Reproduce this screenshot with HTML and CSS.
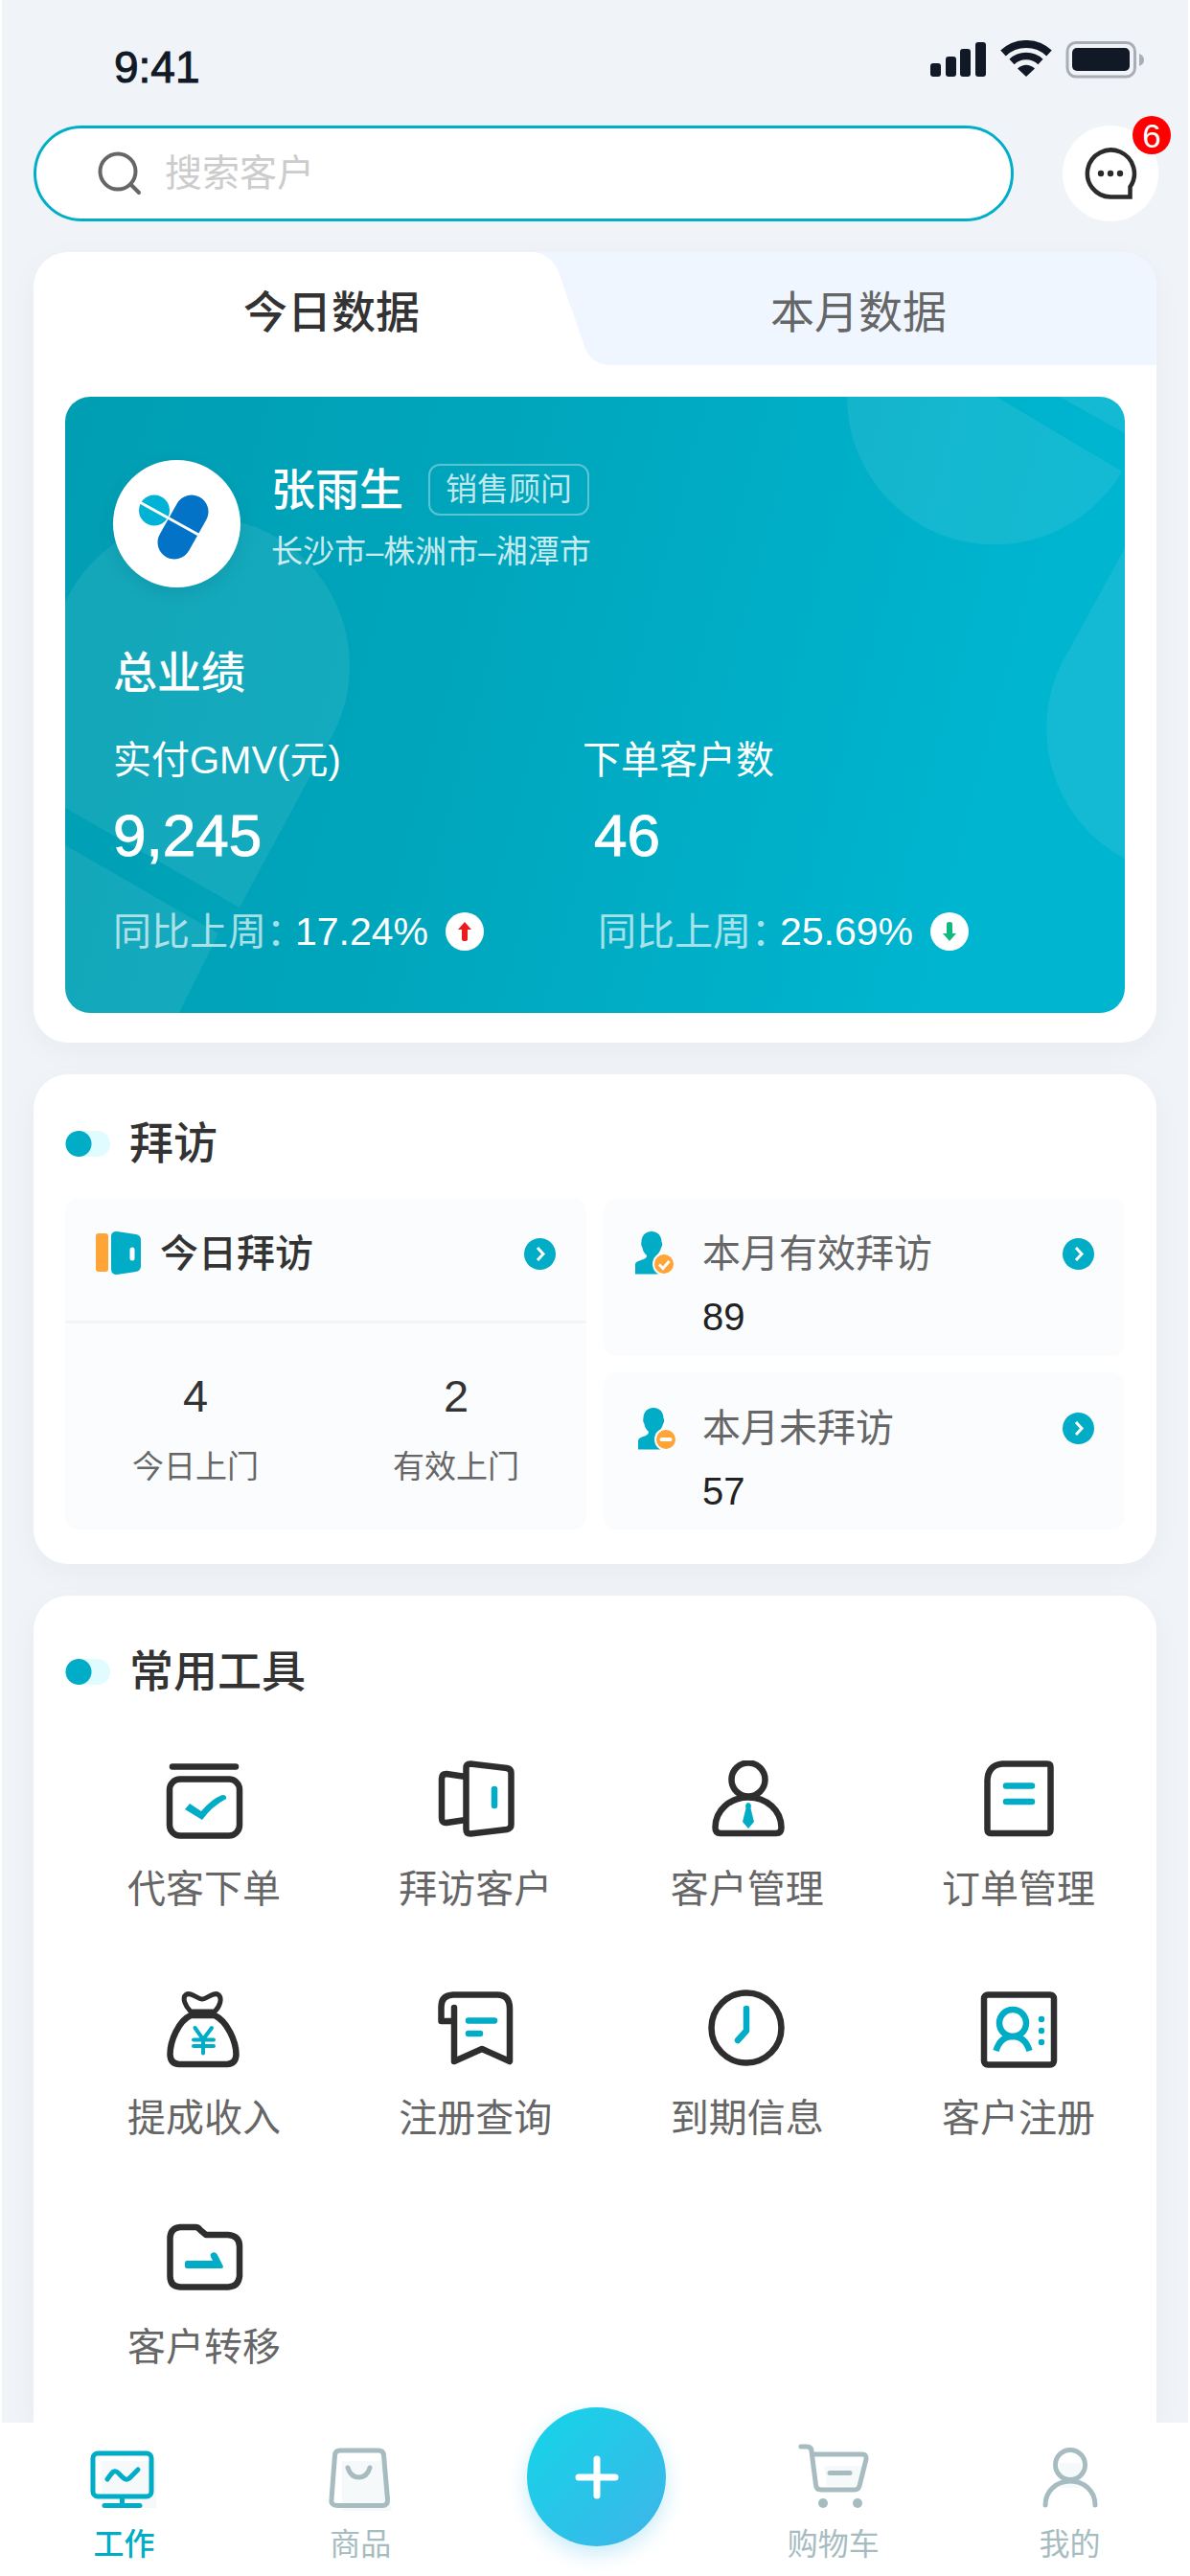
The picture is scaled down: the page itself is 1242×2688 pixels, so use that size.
FILE: index.html
```html
<!DOCTYPE html>
<html lang="zh-CN">
<head>
	<meta charset="utf-8">
	<meta name="viewport" content="width=device-width, initial-scale=1">
	<title>工作</title>
	<link rel="stylesheet" href="styles.css">
</head>
<body>
<div class="app">
	<header class="status">
		<span class="time">9:41</span>
		<svg class="status-icons" viewBox="0 0 226 40">
			<g fill="#121926">
				<rect x="1" y="24" width="11" height="14" rx="3"/>
				<rect x="17" y="17" width="11" height="21" rx="3"/>
				<rect x="32" y="9" width="11" height="29" rx="3"/>
				<rect x="48" y="2" width="11" height="36" rx="3"/>
				<path d="M101 38L92 29.500Q101 22 110 29.500Z"/>
				<rect x="149" y="8" width="60" height="24" rx="5"/>
			</g>
			<g fill="none" stroke="#121926">
				<path d="M77 13.500A35 35 0 0 1 125 13.500" stroke-width="8"/>
				<path d="M86 22.500A22 22 0 0 1 116 22.500" stroke-width="7.500"/>
			</g>
			<rect x="144" y="2.500" width="70.500" height="35.500" rx="9" fill="none" stroke="#a9adb4" stroke-width="3"/>
			<path d="M219 14Q224 16 224 20.500T219 27Z" fill="#a9adb4"/>
		</svg>
	</header>

	<form class="top">
		<label class="search">
			<svg class="search-icon" viewBox="0 0 46 46" fill="none" stroke="#666" stroke-width="4" stroke-linecap="round">
				<circle cx="21" cy="21" r="18.500"/>
				<path d="M35 35L43 43"/>
			</svg>
			<input type="text" placeholder="搜索客户" aria-label="搜索客户">
		</label>
		<button type="button" class="message" aria-label="消息">
			<svg viewBox="0 0 56 56" fill="none" stroke="#2b2b2b" stroke-width="4.500">
				<path d="M28 52.500H48.500V42A24.500 24.500 0 1 0 28 52.500Z"/>
				<g fill="#2b2b2b" stroke="none"><circle cx="18" cy="28" r="3.200"/><circle cx="28" cy="28" r="3.200"/><circle cx="38" cy="28" r="3.200"/></g>
			</svg>
			<span class="badge">6</span>
		</button>
	</form>

	<main>
		<section class="card data">
			<div class="tabs">
				<svg class="tab-shape" viewBox="0 0 642 118" preserveAspectRatio="none">
					<path d="M0 0H642V118H106C88 118 81 108 77 94L54 24Q47 2 28 0Z" fill="#eff6ff"/>
				</svg>
				<button type="button" class="tab active">今日数据</button>
				<button type="button" class="tab">本月数据</button>
			</div>
			<div class="hero">
				<svg class="hero-shapes" viewBox="0 0 1106 643" preserveAspectRatio="xMidYMid slice" fill="#fff" fill-opacity=".08">
					<path d="M0 214A156 156 0 0 1 141 125A156 156 0 0 1 297 281A156 156 0 0 1 274 362L182 533L0 429Z"/>
					<path d="M0 468L160 560L119 643H0Z"/>
					<path d="M816 0A154 154 0 0 0 1103 78L972 0Z"/>
					<path d="M1038 0L1106 38V0Z"/>
					<path d="M1106 158L1049 262A154 154 0 0 0 1106 482Z"/>
				</svg>
				<div class="profile">
					<div class="avatar">
						<svg viewBox="0 0 133 133">
							<circle cx="43" cy="52.500" r="16" fill="#00b2d6"/>
							<path d="M82 54L64 86" stroke="#0273c6" stroke-width="35" stroke-linecap="round"/>
							<path d="M26 43L91 79" stroke="#fff" stroke-width="3"/>
						</svg>
					</div>
					<div>
						<div class="who"><span class="name">张雨生</span><span class="tag">销售顾问</span></div>
						<div class="city">长沙市–株洲市–湘潭市</div>
					</div>
				</div>
				<h2 class="total">总业绩</h2>
				<div class="metrics">
					<div class="metric">
						<div class="metric-label">实付GMV(元)</div>
						<div class="metric-value">9,245</div>
						<div class="compare">
							<span class="dim">同比上周：</span><span>17.24%</span>
							<svg viewBox="0 0 40 40"><circle cx="20" cy="20" r="20" fill="#fff"/><path d="M20 10L27 18H23V28Q23 30 20 30T17 28V18H13Z" fill="#eb1c1c"/></svg>
						</div>
					</div>
					<div class="metric second">
						<div class="metric-label">下单客户数</div>
						<div class="metric-value">46</div>
						<div class="compare">
							<span class="dim">同比上周：</span><span>25.69%</span>
							<svg viewBox="0 0 40 40"><circle cx="20" cy="20" r="20" fill="#fff"/><path d="M20 30L27 22H23V12Q23 10 20 10T17 12V22H13Z" fill="#10b981"/></svg>
						</div>
					</div>
				</div>
			</div>
		</section>

		<section class="card visit">
			<h2 class="title"><span class="dot"></span>拜访</h2>
			<div class="panels">
				<div class="panel today">
					<div class="today-head">
						<svg class="door" viewBox="0 0 48 48">
							<rect x="0" y="3" width="13" height="40" rx="3" fill="#ffa436"/>
							<path d="M22 1L42 4Q47 5 47 10V37Q47 42 42 43L22 46Q16 46 16 40V6Q16 1 22 1Z" fill="#00acc6"/>
							<path d="M38 20V29" stroke="#fff" stroke-width="5" stroke-linecap="round"/>
						</svg>
						<span>今日拜访</span>
						<button type="button" class="go" aria-label="今日拜访"><svg viewBox="0 0 33 33"><path d="M14 10L20 16.500L14 23"/></svg></button>
					</div>
					<div class="counts">
						<div><div class="count">4</div><div class="count-label">今日上门</div></div>
						<div><div class="count">2</div><div class="count-label">有效上门</div></div>
					</div>
				</div>
				<div class="panel month">
					<svg class="person" viewBox="0 0 44 48">
						<path d="M18 1C25 1 28.500 6 28.500 12C29.500 13 29.500 16 28 18C27 22 25 24 23.500 26V29Q24 33 27 33L25 45.500H1V36C1 30 13 32 13 26C11 24 9 22 8.500 18C7 16 7 13 7.500 12C7.500 6 11 1 18 1Z" fill="#00acc6"/>
						<circle cx="31" cy="35" r="12" fill="#fbfcfe"/><circle cx="31" cy="35" r="10" fill="#ffa436"/>
						<path d="M26 35.500L30 39.500L36.500 32" fill="none" stroke="#fff" stroke-width="3"/>
					</svg>
					<div class="month-text"><div class="month-label">本月有效拜访</div><div class="month-value">89</div></div>
					<button type="button" class="go" aria-label="本月有效拜访"><svg viewBox="0 0 33 33"><path d="M14 10L20 16.500L14 23"/></svg></button>
				</div>
				<div class="panel month">
					<svg class="person" viewBox="0 0 44 48">
						<path d="M20 3C27 3 30.500 8 30.500 14C31.500 15 31.500 18 30 20C29 24 27 26 25.500 28V31Q26 35 29 35L27 46.500H4V38C4 32 15 34 15 28C13 26 11 24 10.500 20C9 18 9 15 9.500 14C9.500 8 13 3 20 3Z" fill="#00acc6"/>
						<circle cx="33" cy="36" r="12" fill="#fbfcfe"/><circle cx="33" cy="36" r="10" fill="#ffa436"/>
						<path d="M28.500 36H37.500" stroke="#fff" stroke-width="4" stroke-linecap="round"/>
					</svg>
					<div class="month-text"><div class="month-label">本月未拜访</div><div class="month-value">57</div></div>
					<button type="button" class="go" aria-label="本月未拜访"><svg viewBox="0 0 33 33"><path d="M14 10L20 16.500L14 23"/></svg></button>
				</div>
			</div>
		</section>

		<section class="card tools">
			<h2 class="title"><span class="dot"></span>常用工具</h2>
			<div class="grid">
				<a href="#" class="tool">
					<svg viewBox="0 0 84 84">
						<path class="k" d="M9 6.500H75"/>
						<rect class="k" x="6" y="19.500" width="73" height="59" rx="11"/>
						<path class="f" d="M22 51L27 45L39 53Q50 40 61 36Q66 36 65 40Q50 48 40 62Z"/>
					</svg>
					<span>代客下单</span>
				</a>
				<a href="#" class="tool">
					<svg viewBox="0 0 84 84">
						<path class="k" d="M37 3.500L75 8Q79.500 9 79.500 13V67Q79.500 71 75 72L37 76.500Q32.500 76.500 32.500 72V8Q32.500 3.500 37 3.500ZM32 17L12 14Q7 14 7 19V60Q7 65.500 12 65L32 62"/>
						<path class="t" d="M62 30V47"/>
					</svg>
					<span>拜访客户</span>
				</a>
				<a href="#" class="tool">
					<svg viewBox="0 0 84 84">
						<circle class="k" cx="43" cy="20" r="17.500"/>
						<path class="k" d="M8.500 70C8.500 52 24 38.500 43 38.500S77.500 52 77.500 70Q77.500 76 72 76H14Q8.500 76 8.500 70Z"/>
						<path class="f" d="M43 44Q47 45 45.500 50L49 64L43 71L37 64L40.500 50Q39 45 43 44Z"/>
					</svg>
					<span>客户管理</span>
				</a>
				<a href="#" class="tool">
					<svg viewBox="0 0 84 84">
						<path class="k" d="M25 3.500H72Q75.500 3.500 75.500 7V72Q75.500 76 72 76H13Q9.500 76 9.500 72V21Q10 5 25 3.500Z"/>
						<path class="t" d="M29 26.500H56M29 43H56"/>
					</svg>
					<span>订单管理</span>
				</a>
				<a href="#" class="tool">
					<svg viewBox="0 0 84 84">
						<path class="k thin" d="M28 23C22 17 19 9 23 5.500C28 2 35 10 40 10S52 2 57 5.500C61 9 59 17 53 23Z"/>
						<path class="k" d="M28 27H53C66 33 75.500 54 75.500 68Q75 77.500 66 78H16Q7 77.500 6.500 68C6.500 54 15 33 28 27Z"/>
						<path class="t slim" d="M32.500 40L41 52L50 40M31 52.500H52M31 59H52M41 52V66.500"/>
					</svg>
					<span>提成收入</span>
				</a>
				<a href="#" class="tool">
					<svg viewBox="0 0 84 84">
						<path class="k" d="M20 19V75L49 62L78 75V20Q78 5.500 65 5.500H19Q6.500 6 6.500 18V33H19"/>
						<path class="t" d="M35 32.500H62M35 46H47"/>
					</svg>
					<span>注册查询</span>
				</a>
				<a href="#" class="tool">
					<svg viewBox="0 0 84 84">
						<circle class="k" cx="41" cy="40" r="36.500"/>
						<path class="t" d="M41 20V43L32 53"/>
					</svg>
					<span>到期信息</span>
				</a>
				<a href="#" class="tool">
					<svg viewBox="0 0 84 84">
						<rect class="k" x="6" y="5.500" width="73" height="73" rx="4"/>
						<circle class="t" cx="36" cy="35" r="14"/>
						<path class="t flat" d="M18.500 64Q23 49 36 49T53.500 64"/>
						<g class="f"><circle cx="66" cy="31" r="3.200"/><circle cx="66" cy="43" r="3.200"/><circle cx="66" cy="55" r="3.200"/></g>
					</svg>
					<span>客户注册</span>
				</a>
				<a href="#" class="tool">
					<svg viewBox="0 0 84 84">
						<path class="k" d="M17 9H33Q36 9 38 12L44 17H67Q79 18 79 29V60Q78 71 67 71.500H17Q6.500 71 6.500 60V20Q7 10 17 9Z"/>
						<path class="f" d="M24 44H51L49 40Q48 37 50 36Q54 34 56 38L62 50Q62 52 60 52H24Q22 52 22 50V46Q22 44 24 44Z"/>
					</svg>
					<span>客户转移</span>
				</a>
			</div>
		</section>
	</main>

	<nav class="tabbar">
		<a href="#" class="nav current">
			<svg viewBox="0 0 74 70">
				<path class="pale" d="M14 18H71V67H14Z"/>
				<rect x="5" y="10" width="61" height="45" rx="5"/>
				<path d="M35.500 56V63M17 64.500H54M20 37C25 30 27 26 32 31S39 39 43 36L52 27"/>
			</svg>
			<span>工作</span>
		</a>
		<a href="#" class="nav">
			<svg viewBox="0 0 74 70">
				<path class="pale" d="M18 18H59L70 70H18Z"/>
				<path d="M16 7H56Q61 7 61.500 12L65.500 58Q66 64.500 60 64.500H13Q6 64.500 7 58L10.500 12Q11 7 16 7ZM24 25Q27 35 35.500 35T47 25"/>
			</svg>
			<span>商品</span>
		</a>
		<button type="button" class="add" aria-label="新增">
			<svg viewBox="0 0 46 46"><path d="M23 4V42M4 23H42"/></svg>
		</button>
		<a href="#" class="nav">
			<svg viewBox="0 0 74 70">
				<path class="pale" d="M27 23H67L62 44H30Z"/>
				<path d="M3 3H9Q14 3 14 8L18.500 43Q19 48 24 48H59Q63 48 64 44L71 16Q71.500 11 67 11H15M33 30.500H54"/>
				<circle class="wheel" cx="26" cy="62" r="5"/><circle class="wheel" cx="62" cy="62" r="5"/>
			</svg>
			<span>购物车</span>
		</a>
		<a href="#" class="nav">
			<svg viewBox="0 0 74 70">
				<path class="pale" d="M26 20H48V46H26Z"/>
				<circle cx="37" cy="22" r="15.500"/>
				<path d="M11 64C11 49 23 39 37 39S63 49 63 64"/>
			</svg>
			<span>我的</span>
		</a>
	</nav>
</div>
</body>
</html>
```

FILE: styles.css
```css
*{
	box-sizing: border-box;
}
body{
	margin: 0;
	background: #fff;
	color: #333;
	font-family: "Liberation Sans", "Noto Sans CJK SC", sans-serif;
	font-size: 40px;
}
button{
	border: none;
	padding: 0;
	background: none;
	font: inherit;
	color: inherit;
}
a{
	text-decoration: none;
	color: inherit;
}
h2{
	margin: 0;
	font-size: 46px;
	font-weight: 500;
}
svg{
	display: block;
	flex: none;
}
.app{
	display: flex;
	flex-direction: column;
	min-height: 100vh;
	background: #f0f4f8;
	border: solid #fff;
	border-width: 0 2px;
}

/* status bar */
.status{
	display: flex;
	justify-content: space-between;
	align-items: flex-start;
	padding: 42px 44px 33px 117px;
}
.time{
	font-size: 46px;
	line-height: 56px;
	color: #121926;
	-webkit-text-stroke: 1px #121926;
}
.status-icons{
	width: 226px;
	height: 40px;
}

/* search */
.top{
	display: flex;
	gap: 51px;
	padding: 0 31px 0 33px;
	margin-bottom: 32px;
}
.search{
	flex: 1;
	display: flex;
	align-items: center;
	gap: 24px;
	height: 100px;
	padding: 0 64px;
	background: #fff;
	border: 3px solid #00aec7;
	border-radius: 50px;
}
.search-icon{
	width: 46px;
	height: 46px;
}
.search input{
	flex: 1;
	min-width: 0;
	padding: 0;
	border: none;
	outline: none;
	background: none;
	font: inherit;
	font-size: 39px;
	color: #333;
}
.search input::placeholder{
	color: #ccc;
}
.message{
	position: relative;
	display: flex;
	align-items: center;
	justify-content: center;
	width: 100px;
	height: 100px;
	border-radius: 50%;
	background: #fff;
}
.message svg{
	width: 56px;
	height: 56px;
}
.badge{
	position: absolute;
	top: -10px;
	right: -13px;
	width: 40px;
	height: 40px;
	border-radius: 50%;
	background: #f00;
	color: #fff;
	font-size: 35px;
	line-height: 42px;
	text-align: center;
}

main{
	flex: 1;
	display: flex;
	flex-direction: column;
	gap: 33px;
	padding: 0 33px;
}
.card{
	background: #fff;
	border-radius: 36px;
	box-shadow: 0 8px 30px rgba(40, 50, 60, .04);
}
.data{
	padding-bottom: 31px;
}

/* tabs */
.tabs{
	position: relative;
	display: flex;
	height: 118px;
	border-radius: 36px 36px 0 0;
	overflow: hidden;
}
.tab-shape{
	position: absolute;
	top: 0;
	right: 0;
	width: 58%;
	height: 100%;
}
.tab{
	position: relative;
	flex: 1;
	padding-right: 36px;
	font-size: 46px;
	color: #666;
}
.tab.active{
	padding: 0 0 0 36px;
	font-weight: 500;
	color: #333;
}

/* sales card */
.hero{
	position: relative;
	margin: 33px 33px 0;
	padding: 66px 76px 61px 50px;
	border-radius: 26px;
	overflow: hidden;
	background: linear-gradient(105deg, #009eb3, #00a5bb 35%, #00b5d0 85%);
	color: #fff;
}
.hero-shapes{
	position: absolute;
	top: 0;
	left: 0;
	width: 100%;
	height: 100%;
}
.profile, .total, .metrics{
	position: relative;
}
.profile{
	display: flex;
	gap: 32px;
}
.avatar{
	width: 133px;
	height: 133px;
	border-radius: 50%;
	background: #fff;
	box-shadow: 0 6px 16px rgba(0, 80, 100, .15);
}
.who{
	display: flex;
	align-items: center;
	gap: 26px;
	margin-top: 4px;
}
.name{
	font-size: 46px;
	font-weight: 500;
	line-height: 54px;
}
.tag{
	height: 54px;
	padding: 0 16px;
	border: 2px solid rgba(255, 255, 255, .35);
	border-radius: 12px;
	font-size: 33px;
	line-height: 50px;
	color: rgba(255, 255, 255, .75);
}
.city{
	margin-top: 13px;
	font-size: 33px;
	line-height: 50px;
	color: rgba(255, 255, 255, .8);
}
.total{
	margin-top: 59px;
	line-height: 60px;
}
.metrics{
	display: grid;
	grid-template-columns: 1fr 1fr;
	margin-top: 33px;
}
.metric-label{
	line-height: 56px;
}
.metric-value{
	margin-top: 15px;
	font-size: 62px;
	line-height: 72px;
	-webkit-text-stroke: 1px #fff;
}
.compare{
	display: flex;
	align-items: center;
	margin-top: 40px;
	font-size: 41px;
	line-height: 48px;
}
.compare svg{
	width: 40px;
	height: 40px;
	margin-left: 18px;
}
.dim{
	width: 190px;
	font-size: 40px;
	white-space: nowrap;
	opacity: .65;
}
.second .metric-value{
	padding-left: 12px;
}
.second .compare{
	padding-left: 16px;
}

/* section title */
.title{
	display: flex;
	align-items: center;
	gap: 20px;
	line-height: 64px;
}
.dot{
	width: 47px;
	height: 27px;
	border-radius: 14px;
	background: radial-gradient(circle at 14px 50%, #00acc6 13px, #e0fcff 14px);
}

/* visits */
.visit{
	padding: 40px 33px 36px;
}
.panels{
	display: grid;
	grid-template-columns: 1fr 1fr;
	gap: 17px 18px;
	margin-top: 25px;
}
.panel{
	border-radius: 14px;
	background: #fbfcfe;
}
.today{
	grid-row: span 2;
}
.today-head{
	display: flex;
	align-items: center;
	padding: 30px 32px 42px;
	border-bottom: 3px solid #f3f4f6;
	line-height: 56px;
	font-weight: 500;
}
.today-head span{
	margin-left: 19px;
}
.door{
	width: 48px;
	height: 48px;
}
.go{
	width: 33px;
	height: 33px;
	margin-left: auto;
	border-radius: 50%;
	background: #00acc6;
}
.go path{
	fill: none;
	stroke: #fff;
	stroke-width: 3;
}
.counts{
	display: grid;
	grid-template-columns: 1fr 1fr;
	padding: 48px 0 43px;
	text-align: center;
}
.count{
	font-size: 47px;
	line-height: 56px;
}
.count-label{
	margin-top: 24px;
	font-size: 33px;
	line-height: 44px;
	color: #666;
}
.month{
	display: flex;
	align-items: flex-start;
	padding: 30px 32px 16px;
}
.person{
	width: 44px;
	height: 48px;
	margin-top: 4px;
}
.month-text{
	margin-left: 27px;
}
.month-label{
	line-height: 56px;
	color: #666;
}
.month-value{
	margin-top: 14px;
	line-height: 48px;
	color: #222;
}
.month .go{
	margin-top: 12px;
}

/* tools */
.tools{
	flex: 1;
	padding: 47px 33px 40px;
	border-radius: 36px 36px 0 0;
}
.grid{
	display: grid;
	grid-template-columns: repeat(4, 160px);
	justify-content: space-between;
	row-gap: 77px;
	margin-top: 61px;
	padding: 0 31px 0 65px;
}
.tool{
	display: flex;
	flex-direction: column;
	align-items: center;
	gap: 22px;
	line-height: 56px;
	color: #666;
}
.tool svg{
	width: 84px;
	height: 84px;
}
.k, .t{
	fill: none;
	stroke: #2e2e2e;
	stroke-width: 6.5;
	stroke-linecap: round;
	stroke-linejoin: round;
}
.t{
	stroke: #00acc6;
}
.flat{
	stroke-linecap: butt;
}
.thin{
	stroke-width: 5;
}
.slim{
	stroke-width: 4;
}
.f{
	fill: #00acc6;
}

/* bottom bar */
.tabbar{
	position: sticky;
	bottom: 0;
	display: grid;
	grid-template-columns: repeat(5, 1fr);
	height: 160px;
	padding-left: 4px;
	background: #fff;
}
.nav{
	display: flex;
	flex-direction: column;
	align-items: center;
	gap: 15px;
	padding-top: 22px;
	font-size: 32px;
	line-height: 40px;
	color: #a6bcc0;
}
.nav svg{
	width: 74px;
	height: 70px;
	fill: none;
	stroke: currentColor;
	stroke-width: 5;
	stroke-linecap: round;
}
.nav .pale{
	fill: #f5f9fa;
	stroke: none;
}
.nav .wheel{
	fill: currentColor;
	stroke: none;
}
.nav.current{
	color: #00acc6;
	font-weight: 500;
}
.add{
	justify-self: center;
	display: flex;
	align-items: center;
	justify-content: center;
	width: 145px;
	height: 145px;
	margin-top: -16px;
	border-radius: 50%;
	background: linear-gradient(135deg, #1ccfe8 20%, #3ab8e9 90%);
	box-shadow: 0 8px 20px rgba(40, 180, 230, .25);
}
.add svg{
	width: 46px;
	height: 46px;
	stroke: #fff;
	stroke-width: 7;
	stroke-linecap: round;
}
```
